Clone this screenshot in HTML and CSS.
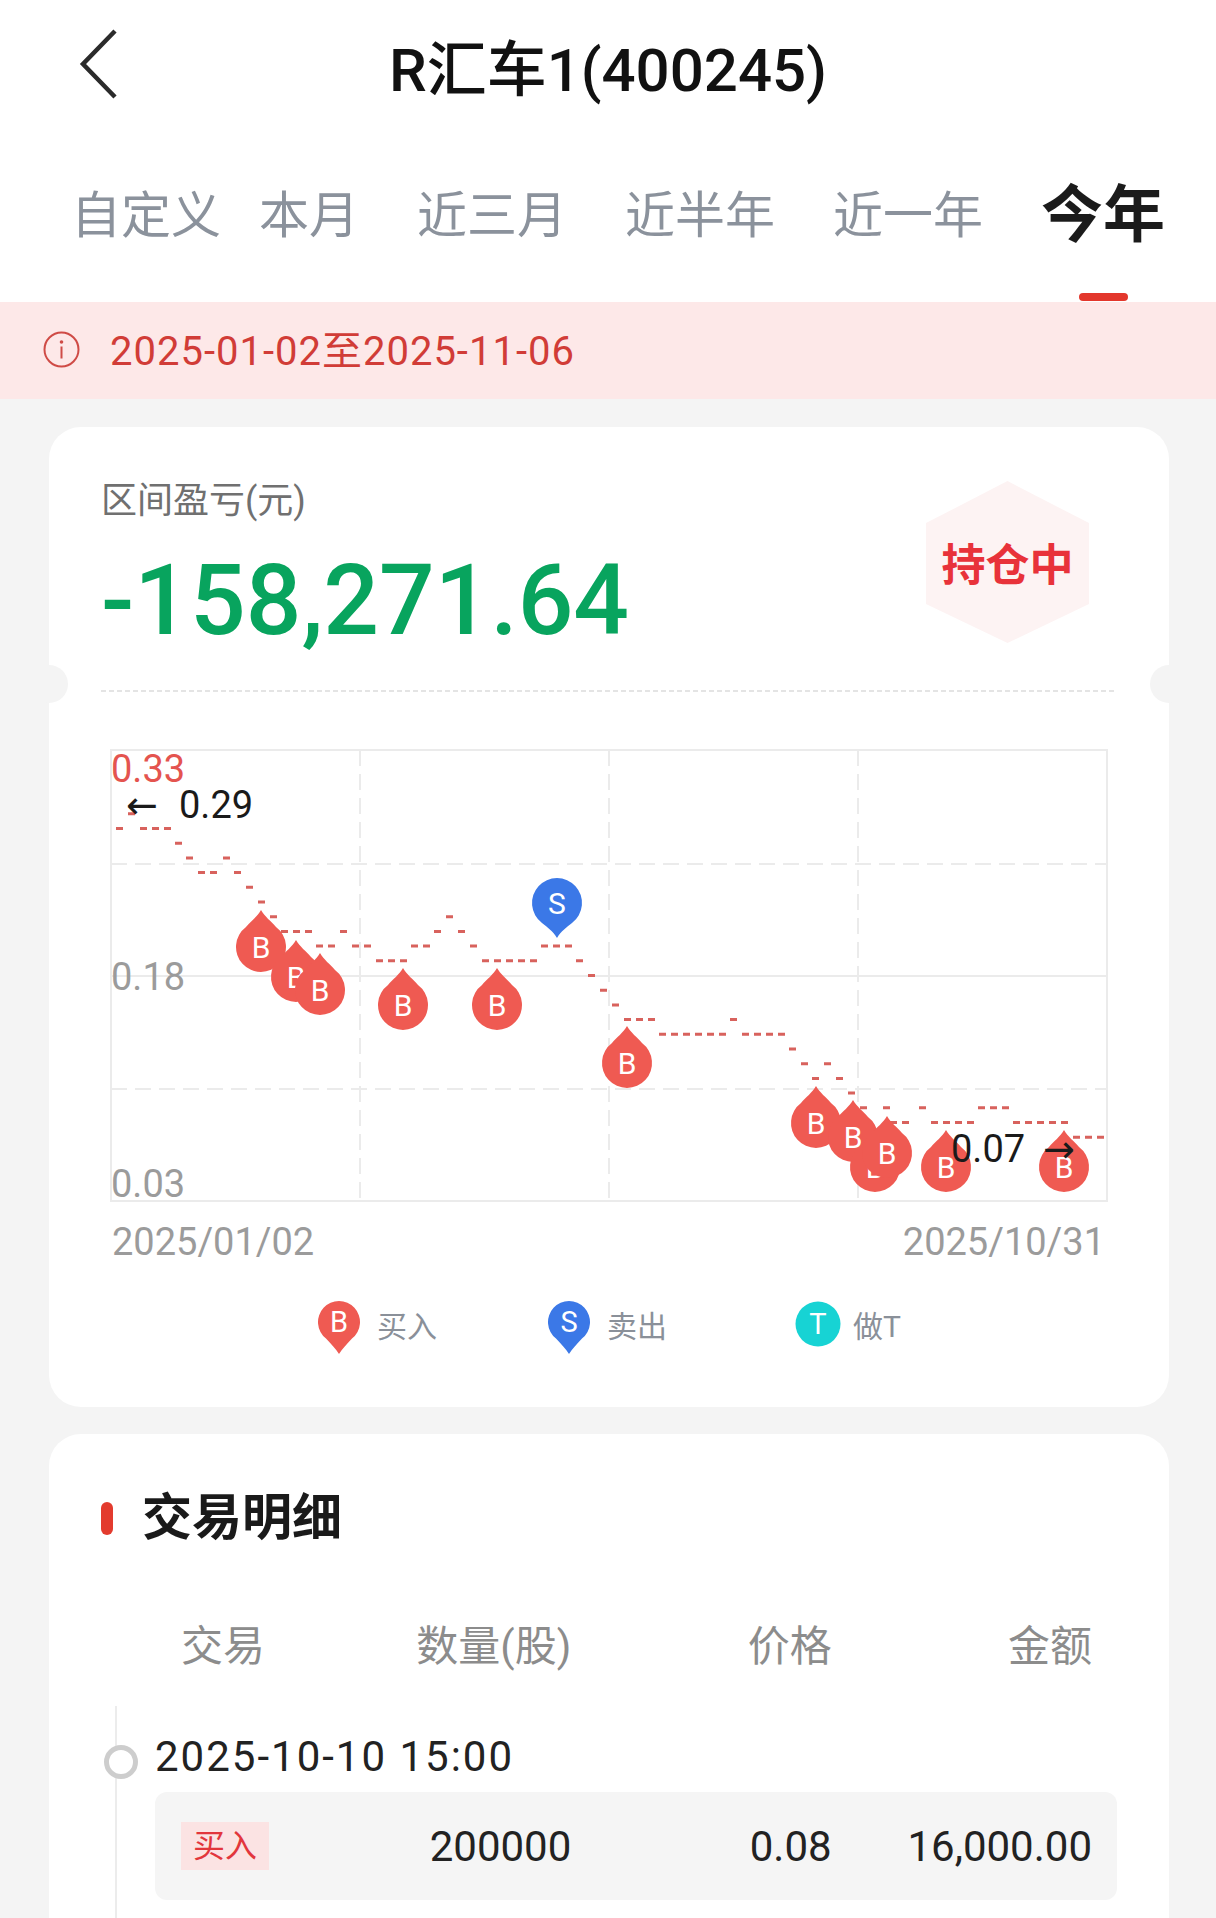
FILE: index.html
```html
<!DOCTYPE html>
<html lang="zh-CN">

<head>
  <meta charset="UTF-8">
  <meta name="viewport" content="width=device-width, initial-scale=1.0">
  <title>R汇车1(400245)</title>
  <link rel="stylesheet" href="styles.css">
</head>

<body>
  <header class="topbar">
    <div class="nav">
      <svg class="back" viewBox="0 0 42 72">
        <path d="M37 3 L5 36 L37 69" />
      </svg>
      <h1 class="title">R汇车1(400245)</h1>
    </div>
    <nav class="tabs">
      <span class="tab tab-first">自定义</span>
      <span class="tab">本月</span>
      <span class="tab">近三月</span>
      <span class="tab">近半年</span>
      <span class="tab">近一年</span>
      <span class="tab active">今年</span>
    </nav>
  </header>

  <div class="range-tip">
    <svg class="info-icon" viewBox="0 0 37 37">
      <circle cx="18.5" cy="18.5" r="17" />
      <circle class="dot" cx="18.5" cy="11" r="1.8" />
      <path d="M18.5 15.5v12" />
    </svg>
    <span>2025-01-02至2025-11-06</span>
  </div>

  <main class="page">
    <section class="card profit-card">
      <div class="profit-head">
        <div>
          <p class="profit-label">区间盈亏(元)</p>
          <p class="profit-value">-158,271.64</p>
        </div>
        <div class="hold-badge">持仓中</div>
      </div>
      <div class="ticket-line"></div>

      <svg class="chart" viewBox="101 692 1016 583">
        <defs>
          <path id="dropUp" d="M0 -37 C4 -30 10 -26 15 -20 A25 25 0 1 1 -15 -20 C-10 -26 -4 -30 0 -37Z" />
          <path id="dropDown" d="M0 35 C-4 28 -10 24 -15 20 A25 25 0 1 1 15 20 C10 24 4 28 0 35Z" />
        </defs>
        <g class="grid">
          <rect x="111" y="750" width="996" height="451" />
          <line x1="111" y1="976" x2="1107" y2="976" />
          <g class="grid-dash">
            <line x1="111" y1="864" x2="1107" y2="864" />
            <line x1="111" y1="1089" x2="1107" y2="1089" />
            <line x1="360" y1="750" x2="360" y2="1201" />
            <line x1="609" y1="750" x2="609" y2="1201" />
            <line x1="858" y1="750" x2="858" y2="1201" />
          </g>
        </g>

        <text class="axis axis-max" x="111" y="782">0.33</text>
        <text class="axis" x="111" y="990">0.18</text>
        <text class="axis" x="111" y="1197">0.03</text>
        <text class="axis" x="112" y="1255">2025/01/02</text>
        <text class="axis axis-end" x="1105" y="1255">2025/10/31</text>

        <path id="priceLine" class="price-line" d="" />

        <g class="pin-b" transform="translate(261 947)"><use href="#dropUp" /><text y="11">B</text></g>
        <g class="pin-b" transform="translate(296 977)"><use href="#dropUp" /><text y="11">B</text></g>
        <g class="pin-b" transform="translate(320 990)"><use href="#dropUp" /><text y="11">B</text></g>
        <g class="pin-b" transform="translate(403 1005)"><use href="#dropUp" /><text y="11">B</text></g>
        <g class="pin-b" transform="translate(497 1005)"><use href="#dropUp" /><text y="11">B</text></g>
        <g class="pin-s" transform="translate(557 903)"><use href="#dropDown" /><text y="11">S</text></g>
        <g class="pin-b" transform="translate(627 1063)"><use href="#dropUp" /><text y="11">B</text></g>
        <g class="pin-b" transform="translate(816 1123)"><use href="#dropUp" /><text y="11">B</text></g>
        <g class="pin-b" transform="translate(853 1137)"><use href="#dropUp" /><text y="11">B</text></g>
        <g class="pin-b" transform="translate(875 1167)"><use href="#dropUp" /><text y="11">B</text></g>
        <g class="pin-b" transform="translate(887 1153)"><use href="#dropUp" /><text y="11">B</text></g>
        <g class="pin-b" transform="translate(946 1167)"><use href="#dropUp" /><text y="11">B</text></g>
        <g class="pin-b" transform="translate(1064 1167)"><use href="#dropUp" /><text y="11">B</text></g>

        <text class="mark" x="126" y="818">←<tspan x="179">0.29</tspan></text>
        <text class="mark" x="951" y="1162">0.07<tspan x="1043">→</tspan></text>
      </svg>

      <div class="legend">
        <div class="legend-item">
          <svg class="legend-pin" viewBox="0 0 44 56">
            <path class="fill-b" d="M22 54 C19 49 14 44 9 38.5 A21 21 0 1 1 35 38.5 C30 44 25 49 22 54Z" />
            <text x="22" y="32">B</text>
          </svg>
          <span>买入</span>
        </div>
        <div class="legend-item">
          <svg class="legend-pin" viewBox="0 0 44 56">
            <path class="fill-s" d="M22 54 C19 49 14 44 9 38.5 A21 21 0 1 1 35 38.5 C30 44 25 49 22 54Z" />
            <text x="22" y="32">S</text>
          </svg>
          <span>卖出</span>
        </div>
        <div class="legend-item legend-t">
          <svg class="legend-pin" viewBox="0 0 46 56">
            <circle class="fill-t" cx="23" cy="28" r="22.5" />
            <text x="23" y="38">T</text>
          </svg>
          <span>做T</span>
        </div>
      </div>
    </section>

    <section class="card trade-card">
      <h2 class="section-title">交易明细</h2>
      <div class="trade-head">
        <span>交易</span>
        <span>数量(股)</span>
        <span>价格</span>
        <span>金额</span>
      </div>
      <div class="timeline">
        <div class="trade-group">
          <div class="trade-time">2025-10-10 15:00</div>
          <div class="trade-row">
            <span class="trade-tag">买入</span>
            <span>200000</span>
            <span>0.08</span>
            <span>16,000.00</span>
          </div>
        </div>
      </div>
    </section>
  </main>

  <script charset="utf-8">
    // price levels drawn as short dashes: [price, first x, count]
    const runs = [
      [0.29, 128, 1],
      [0.28, 116, 1], [0.28, 140, 3],
      [0.27, 175, 1],
      [0.26, 186, 1], [0.26, 223, 1],
      [0.25, 198, 2], [0.25, 234, 1],
      [0.24, 246, 1],
      [0.23, 258, 1],
      [0.22, 270, 1], [0.22, 446, 1],
      [0.21, 281, 3], [0.21, 340, 1], [0.21, 434, 1], [0.21, 458, 1],
      [0.20, 316, 2], [0.20, 352, 2], [0.20, 411, 2], [0.20, 470, 1], [0.20, 541, 3],
      [0.19, 376, 3], [0.19, 482, 5], [0.19, 576, 1],
      [0.18, 588, 1],
      [0.17, 600, 1],
      [0.16, 612, 1],
      [0.15, 624, 3], [0.15, 730, 1],
      [0.14, 659, 6], [0.14, 742, 4],
      [0.13, 789, 1],
      [0.12, 801, 1], [0.12, 824, 1],
      [0.11, 812, 1], [0.11, 836, 1],
      [0.10, 848, 1],
      [0.09, 860, 1], [0.09, 883, 1], [0.09, 919, 1], [0.09, 978, 3],
      [0.08, 890, 2], [0.08, 931, 4], [0.08, 1013, 5],
      [0.07, 1073, 3]
    ]

    const levelY = price => 755 + (0.33 - price) * 1470

    let d = ''
    for (let [price, x, count] of runs) {
      const y = levelY(price).toFixed(1)
      for (let i = 0; i < count; i++) d += `M${x + i * 12} ${y}h7`
    }
    document.getElementById('priceLine').setAttribute('d', d)
  </script>
</body>

</html>
```

FILE: styles.css
```css
* {
  margin: 0;
  padding: 0;
  box-sizing: border-box;
}

body {
  width: 1216px;
  background-color: #f4f4f4;
  color: #1a1a1a;
  font-family: Roboto, "Noto Sans CJK SC", sans-serif;
}

/* header */
.topbar {
  background-color: #fff;
}

.nav {
  display: grid;
  grid-template-columns: 1fr auto 1fr;
  align-items: center;
  height: 128px;
}

.back {
  width: 42px;
  height: 72px;
  margin-left: 78px;
}

.back path {
  fill: none;
  stroke: #2b2b2b;
  stroke-width: 4.5;
}

.title {
  font-size: 60px;
  font-weight: 500;
  color: #111;
}

.tabs {
  display: flex;
  align-items: flex-end;
  gap: 58px;
  height: 174px;
  padding: 0 0 1px 71px;
}

.tab {
  display: flex;
  flex-direction: column;
  align-items: center;
  gap: 47px;

  font-size: 50px;
  line-height: 60px;
  color: #8b929c;
}

.tab::after {
  content: "";
  width: 49px;
  height: 8px;
  border-radius: 4px;
}

.tab-first {
  margin-right: -20px;
}

.tab.active {
  font-size: 62px;
  font-weight: 700;
  color: #1b1b1b;
}

.tab.active::after {
  background-color: #e3372c;
}

.range-tip {
  display: flex;
  align-items: center;
  gap: 30px;

  height: 97px;
  padding: 0 0 6px 43px;

  background-color: #fde8e8;
  color: #d13c37;
  font-size: 40px;
  letter-spacing: 1px;
}

.info-icon {
  width: 37px;
  height: 37px;
  margin-top: 4px;
}

.info-icon circle,
.info-icon path {
  fill: none;
  stroke: #cf4b46;
  stroke-width: 2;
}

.info-icon .dot {
  fill: #cf4b46;
  stroke: none;
}

/* cards */
.page {
  display: flex;
  flex-direction: column;
  gap: 27px;
  padding: 28px 47px 0 49px;
}

.card {
  background-color: #fff;
  border-radius: 32px;
}

.profit-card {
  padding: 50px 52px 53px;
}

.profit-head {
  display: flex;
  justify-content: space-between;
  align-items: flex-start;
}

.profit-label {
  font-size: 36px;
  line-height: 48px;
  color: #707070;
}

.profit-value {
  margin-top: 26px;
  font-size: 98px;
  line-height: 100px;
  font-weight: 500;
  color: #08a45e;
}

.hold-badge {
  display: flex;
  align-items: center;
  justify-content: center;

  width: 163px;
  height: 162px;
  margin: 4px 28px 0 0;

  clip-path: polygon(50% 0, 100% 26%, 100% 76%, 50% 100%, 0 76%, 0 26%);
  background-color: #fdf3f3;
  color: #e8323a;
  font-size: 44px;
  font-weight: 700;
}

.ticket-line {
  position: relative;
  height: 2px;
  margin-top: 39px;
  background-image: repeating-linear-gradient(to right, #e4e4e4 0 5px, transparent 5px 8px);
}

.ticket-line::before,
.ticket-line::after {
  content: "";
  position: absolute;
  top: -25px;
  width: 38px;
  height: 38px;
  border-radius: 50%;
  background-color: #f4f4f4;
}

.ticket-line::before {
  left: -71px;
}

.ticket-line::after {
  right: -71px;
}

/* chart */
.chart {
  display: block;
  width: 1016px;
  height: 583px;
}

.grid rect,
.grid line {
  fill: none;
  stroke: #ebebeb;
  stroke-width: 2;
}

.grid-dash line {
  stroke-dasharray: 16 8;
}

.chart text {
  font-family: Roboto, "DejaVu Sans", sans-serif;
  font-size: 38px;
}

.axis {
  fill: #9b9b9b;
}

.axis-max {
  fill: #e4544f;
}

.axis-end {
  text-anchor: end;
}

.price-line {
  fill: none;
  stroke: #d8625d;
  stroke-width: 3;
}

.pin-b use {
  fill: #ef5a52;
}

.pin-s use {
  fill: #3b78e7;
}

.chart .pin-b text,
.chart .pin-s text {
  fill: #fff;
  font-size: 30px;
  text-anchor: middle;
}

.chart .mark {
  fill: #1a1a1a;
}

.legend {
  display: flex;
  justify-content: center;
  align-items: center;
  gap: 110px;

  height: 60px;
  margin-top: 19px;
}

.legend-item {
  display: flex;
  align-items: center;
  gap: 16px;

  font-size: 30px;
  color: #8a9099;
}

.legend-t {
  gap: 12px;
  margin-left: 18px;
}

.legend-pin {
  width: 44px;
  height: 56px;
  margin-top: 8px;
}

.legend-t .legend-pin {
  width: 46px;
  margin-top: 0;
}

.legend-pin text {
  fill: #fff;
  font-family: Roboto, sans-serif;
  font-size: 29px;
  text-anchor: middle;
}

.fill-b {
  fill: #ef5a52;
}

.fill-s {
  fill: #3b78e7;
}

.fill-t {
  fill: #17d3d4;
}

/* trades */
.trade-card {
  padding: 49px 52px 40px;
}

.section-title {
  display: flex;
  align-items: center;
  gap: 29px;

  font-size: 50px;
  line-height: 70px;
  font-weight: 700;
}

.section-title::before {
  content: "";
  width: 12px;
  height: 33px;
  border-radius: 6px;
  background-color: #e33b2e;
}

.trade-head,
.trade-row {
  display: grid;
  grid-template-columns: 130px 1fr 1fr 1fr;
  align-items: center;
}

.trade-head {
  margin-top: 64px;
  padding: 0 25px 0 80px;
  font-size: 42px;
  line-height: 60px;
  color: #8c8c8c;
}

.trade-head span:not(:first-child),
.trade-row span:not(:first-child) {
  text-align: right;
}

.timeline {
  margin: 29px 0 0 14px;
  padding-left: 38px;
  border-left: 2px solid #ececec;
}

.trade-group {
  padding: 21px 0 40px;
}

.trade-time {
  position: relative;
  font-size: 42px;
  line-height: 60px;
  letter-spacing: 2px;
  color: #222;
}

.trade-time::before {
  content: "";
  position: absolute;
  left: -51px;
  top: 18px;
  width: 24px;
  height: 24px;
  border: 5px solid #cdcdcd;
  border-radius: 50%;
  background-color: #fff;
}

.trade-row {
  height: 108px;
  margin-top: 5px;
  padding: 0 25px 0 26px;

  border-radius: 12px;
  background-color: #f5f5f5;
  font-size: 42px;
  color: #222;
}

.trade-tag {
  justify-self: start;
  padding: 0 12px;

  background-color: #fbe3e3;
  color: #e2363c;
  font-size: 32px;
  line-height: 48px;
}
```
